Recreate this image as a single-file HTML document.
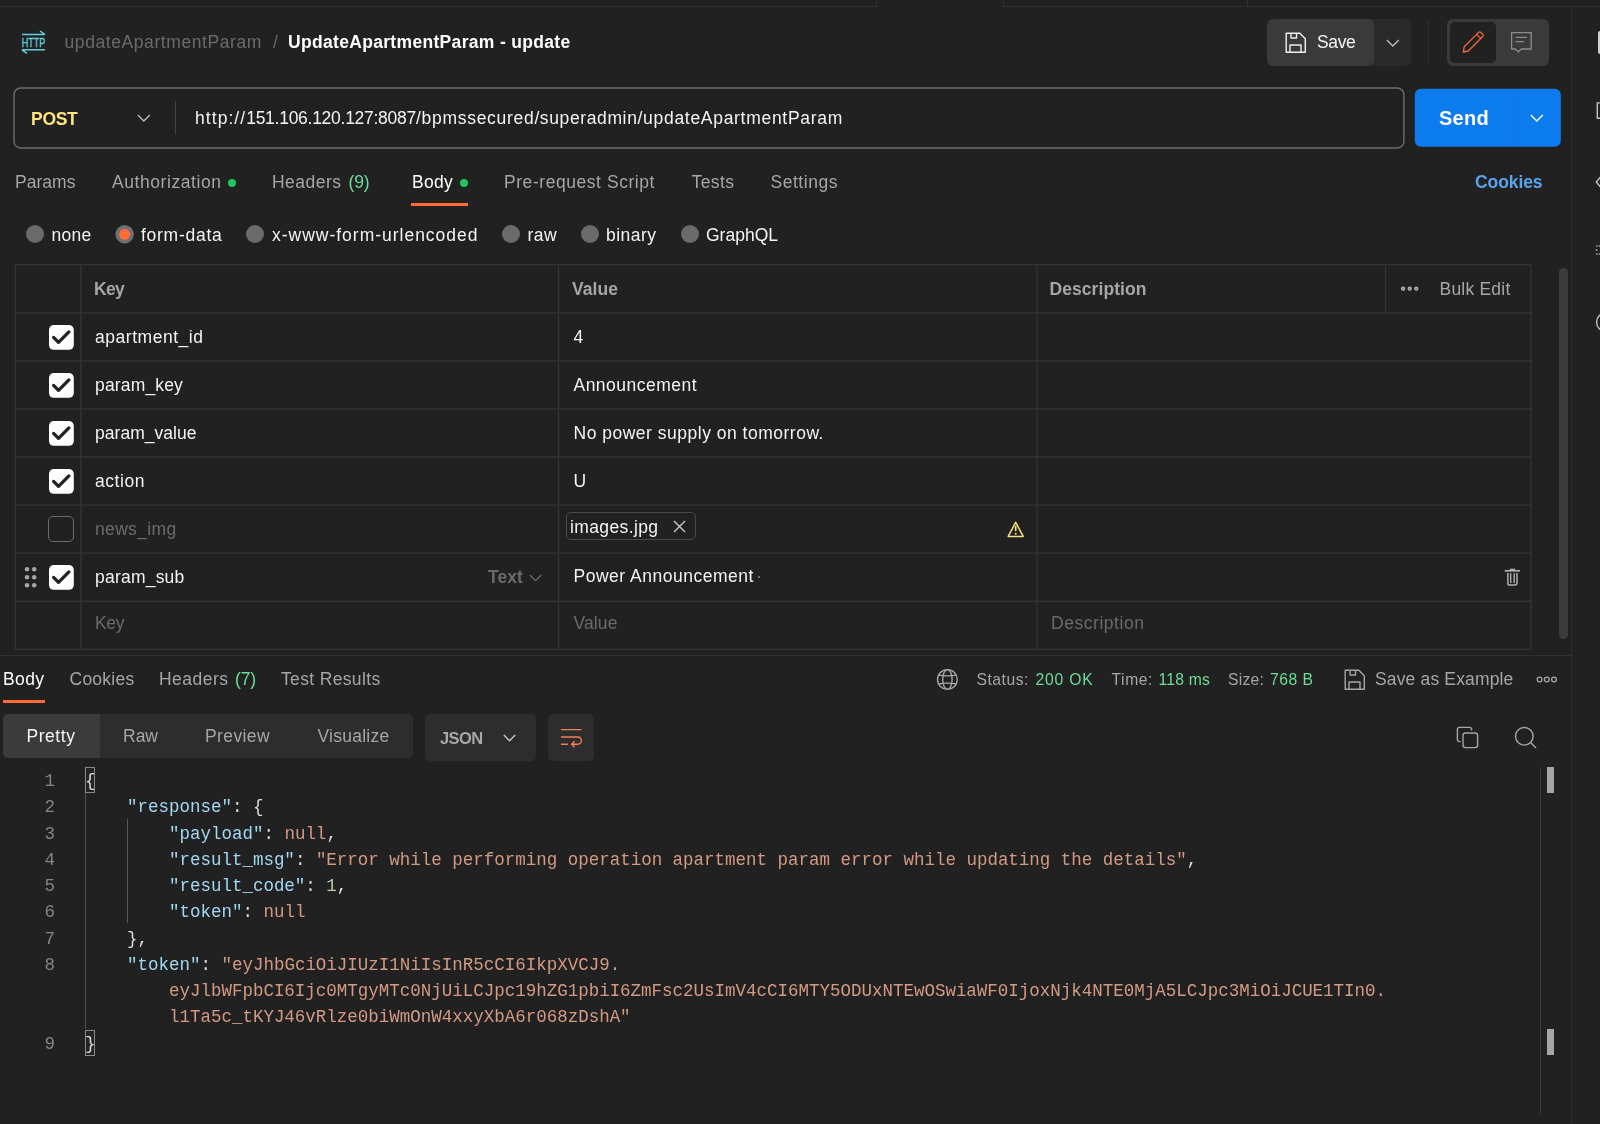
<!DOCTYPE html>
<html lang="en">
<head>
<meta charset="utf-8">
<title>UpdateApartmentParam - update</title>
<style>
*{box-sizing:border-box;margin:0;padding:0}
html,body{width:1600px;height:1124px;overflow:hidden;background:#212121}
body{position:relative;font-family:"Liberation Sans",Arial,sans-serif;color:#f4f4f4}
.gl{position:absolute;left:0;top:0;width:1600px;height:1124px;will-change:transform}
.t{position:absolute;white-space:pre;line-height:24px;height:24px}
.b{position:absolute}
.hl{position:absolute;height:1px;background:#333}
.vl{position:absolute;width:1px;background:#333}
svg{position:absolute;overflow:visible}
.cb{position:absolute;width:25px;height:25px;border-radius:5px;background:#fff}
pre{position:absolute;font-family:"Liberation Mono",monospace;font-size:17.497px;line-height:26.25px;white-space:pre;color:#dcdcdc}
.k{color:#a2d8f2}.s{color:#d29a83}.n{color:#b5cea8}.p{color:#dcdcdc}
</style>
</head>
<body>
<!-- top tab strip remnants -->
<div class="hl" style="left:0;top:6px;width:877px;background:#303030"></div>
<div class="hl" style="left:1003px;top:6px;width:597px;background:#303030"></div>
<div class="vl" style="left:876px;top:0;height:6px;background:#303030"></div>
<div class="vl" style="left:1003px;top:0;height:6px;background:#303030"></div>
<div class="vl" style="left:1247px;top:0;height:6px;background:#303030"></div>
<!-- right sidebar -->
<div class="vl" style="left:1571px;top:7px;height:1117px;background:#303030"></div>
<div class="b" style="left:1598px;top:31px;width:4px;height:23px;border-radius:2px;background:#cfcfcf"></div>
<svg style="left:1590px;top:90px" width="10" height="260" viewBox="1590 90 10 260"><g fill="none" stroke="#c4c4c4" stroke-width="1.4"><path d="M1602 102.9H1597.3V118.3H1602"/><path d="M1602 175.3L1596.3 182L1602 188.7"/><circle cx="1606" cy="322.2" r="9.4"/></g><path d="M1596 246h1.6M1598.6 246H1600M1595.6 250h2M1596 254h1.6M1598.6 254H1600" fill="none" stroke="#9a9a9a" stroke-width="1.3"/></svg>

<!-- HTTP icon -->
<svg style="left:20px;top:29px" width="28" height="26" viewBox="0 0 28 26">
<path d="M2 5.6H25 M20 2l5 3.6 M25 20.8H2 M7 24.4l-5-3.6" fill="none" stroke="#5fd0de" stroke-width="1.5"/>
<text x="1.7" y="17.8" font-family="Liberation Sans, Arial, sans-serif" font-size="12.5" fill="#5fd0de" stroke="#5fd0de" stroke-width="0.35" textLength="23.6" lengthAdjust="spacingAndGlyphs">HTTP</text>
</svg>

<!-- Save button -->
<div class="b" style="left:1368px;top:19px;width:42.5px;height:46.5px;background:#2a2a2a;border-radius:0 6px 6px 0"></div>
<div class="b" style="left:1267px;top:19px;width:107px;height:46.5px;background:#3a3a3a;border-radius:6px"></div>
<svg style="left:1285px;top:31.5px" width="22" height="22" viewBox="0 0 22 22"><path d="M1.2 1.2H14.8L20.3 6.7V20.3H1.2Z M6 1.2V6H11.5V1.2 M5 20.3V13H16V20.3" fill="none" stroke="#f0f0f0" stroke-width="1.4" stroke-linejoin="round"/></svg>
<svg style="left:1386px;top:38.5px" width="14" height="9" viewBox="0 0 14 9"><path d="M0.8 1l6 6 6-6" fill="none" stroke="#bdbdbd" stroke-width="1.3"/></svg>
<div class="vl" style="left:1428px;top:19px;height:46px;background:#303030"></div>
<!-- toggle -->
<div class="b" style="left:1447px;top:19px;width:102px;height:46.5px;background:#3a3a3a;border-radius:6px"></div>
<div class="b" style="left:1450px;top:22px;width:46px;height:40.5px;background:#212121;border-radius:5px"></div>
<svg style="left:1461px;top:30px" width="24" height="24" viewBox="0 0 24 24"><path d="M2.3 22l0.9-5.2L17.6 2.4a1.6 1.6 0 0 1 2.2 0l1.9 1.9a1.6 1.6 0 0 1 0 2.2L7.3 21Z M15.6 4.4l4 4" fill="none" stroke="#f26b3a" stroke-width="1.3" stroke-linejoin="round"/></svg>
<svg style="left:1510px;top:31px" width="24" height="24" viewBox="0 0 24 24"><path d="M1.6 1.6H21.2V18H11.5L8.3 20.8L5.2 18H1.6Z M5.5 6.3H17 M5.5 10.7H14" fill="none" stroke="#8c8c8c" stroke-width="1.3" stroke-linejoin="round"/></svg>

<!-- URL bar -->
<svg style="left:0;top:80px" width="1420" height="80" viewBox="0 80 1420 80"><rect x="14" y="88.05" width="1389.9" height="59.95" rx="6.5" fill="none" stroke="#6e6e6e" stroke-width="1.4"/></svg>
<svg style="left:136.5px;top:113.5px" width="14" height="9" viewBox="0 0 14 9"><path d="M0.8 1l6 6 6-6" fill="none" stroke="#bdbdbd" stroke-width="1.3"/></svg>
<div class="vl" style="left:175px;top:101px;height:34px;background:#444"></div>
<!-- Send -->
<svg style="left:1410px;top:80px" width="160" height="80" viewBox="1410 80 160 80"><rect x="1414.8" y="88.7" width="146" height="58" rx="6" fill="#0c7bee"/></svg>
<div class="vl" style="left:1513px;top:89px;height:57.5px;background:#1674de"></div>
<svg style="left:1530px;top:114px" width="14" height="9" viewBox="0 0 14 9"><path d="M0.8 1l6 6 6-6" fill="none" stroke="#ffffff" stroke-width="1.5"/></svg>

<!-- tab dots & underline -->
<div class="b" style="left:227.5px;top:178.5px;width:8.5px;height:8.5px;border-radius:50%;background:#22c25e"></div>
<div class="b" style="left:459.5px;top:178.5px;width:8.5px;height:8.5px;border-radius:50%;background:#22c25e"></div>
<div class="b" style="left:411px;top:202.5px;width:57px;height:3px;background:#ff6c37"></div>

<!-- radios -->
<svg style="left:0;top:215px" width="800" height="40" viewBox="0 215 800 40"><circle cx="35" cy="234" r="9" fill="#6b6b6b"/><circle cx="255" cy="234" r="9" fill="#6b6b6b"/><circle cx="511" cy="234" r="9" fill="#6b6b6b"/><circle cx="590" cy="234" r="9" fill="#6b6b6b"/><circle cx="690" cy="234" r="9" fill="#6b6b6b"/><circle cx="124.6" cy="234.3" r="9.2" fill="#6e7074"/><circle cx="124.6" cy="234.3" r="5.5" fill="#ff6c37"/></svg>

<!-- table -->
<svg style="left:0;top:0" width="1600" height="700" viewBox="0 0 1600 700"><g fill="none" stroke="#343434" stroke-width="1.3"><path d="M14.7 264.70H1531.5"/><path d="M14.7 312.78H1531.5"/><path d="M14.7 360.86H1531.5"/><path d="M14.7 408.94H1531.5"/><path d="M14.7 457.02H1531.5"/><path d="M14.7 505.10H1531.5"/><path d="M14.7 553.18H1531.5"/><path d="M14.7 601.26H1531.5"/><path d="M14.7 649.34H1531.5"/><path d="M15.4 264.7V649.3"/><path d="M80.9 264.7V649.3"/><path d="M558.6 264.7V649.3"/><path d="M1037.1 264.7V649.3"/><path d="M1530.9 264.7V649.3"/><path d="M1385.5 264.7V312.8"/></g></svg>
<!-- scrollbar -->
<div class="b" style="left:1558.5px;top:268px;width:9px;height:371px;border-radius:5px;background:#3b3b3b"></div>
<!-- bulk dots -->
<svg style="left:1398px;top:280px" width="24" height="18" viewBox="1398 280 24 18"><g fill="#8a8a8a" stroke="#b4b4b4" stroke-width="1.1"><circle cx="1403.1" cy="288.7" r="1.6"/><circle cx="1409.7" cy="288.7" r="1.6"/><circle cx="1416.3" cy="288.7" r="1.6"/></g></svg>

<!-- checkboxes -->
<svg style="left:49px;top:324.6px" width="25" height="25" viewBox="0 0 25 25"><rect x="0" y="0" width="24.8" height="24.8" rx="4.8" fill="#ffffff"/><path d="M4.6 12.4l4.9 4.9 10.4-10.4" fill="none" stroke="#212121" stroke-width="3.3" stroke-linecap="round" stroke-linejoin="round"/></svg>
<svg style="left:49px;top:372.7px" width="25" height="25" viewBox="0 0 25 25"><rect x="0" y="0" width="24.8" height="24.8" rx="4.8" fill="#ffffff"/><path d="M4.6 12.4l4.9 4.9 10.4-10.4" fill="none" stroke="#212121" stroke-width="3.3" stroke-linecap="round" stroke-linejoin="round"/></svg>
<svg style="left:49px;top:420.8px" width="25" height="25" viewBox="0 0 25 25"><rect x="0" y="0" width="24.8" height="24.8" rx="4.8" fill="#ffffff"/><path d="M4.6 12.4l4.9 4.9 10.4-10.4" fill="none" stroke="#212121" stroke-width="3.3" stroke-linecap="round" stroke-linejoin="round"/></svg>
<svg style="left:49px;top:468.8px" width="25" height="25" viewBox="0 0 25 25"><rect x="0" y="0" width="24.8" height="24.8" rx="4.8" fill="#ffffff"/><path d="M4.6 12.4l4.9 4.9 10.4-10.4" fill="none" stroke="#212121" stroke-width="3.3" stroke-linecap="round" stroke-linejoin="round"/></svg>
<svg style="left:49px;top:565.0px" width="25" height="25" viewBox="0 0 25 25"><rect x="0" y="0" width="24.8" height="24.8" rx="4.8" fill="#ffffff"/><path d="M4.6 12.4l4.9 4.9 10.4-10.4" fill="none" stroke="#212121" stroke-width="3.3" stroke-linecap="round" stroke-linejoin="round"/></svg>
<div class="b" style="left:48px;top:516px;width:26px;height:26px;border-radius:5px;border:1.6px solid #6b6b6b;background:#212121"></div>
<!-- drag handle -->
<svg style="left:20px;top:560px" width="24" height="34" viewBox="20 560 24 34"><g fill="#a6a6a6"><circle cx="27" cy="569.3" r="2.25"/><circle cx="34.2" cy="569.3" r="2.25"/><circle cx="27" cy="577.3" r="2.25"/><circle cx="34.2" cy="577.3" r="2.25"/><circle cx="27" cy="585.3" r="2.25"/><circle cx="34.2" cy="585.3" r="2.25"/></g></svg>
<!-- file chip -->
<div class="b" style="left:565.5px;top:512.3px;width:130px;height:28px;border:1.2px solid #4a4a4a;border-radius:5px"></div>
<svg style="left:673px;top:519.8px" width="13" height="13" viewBox="0 0 13 13"><path d="M1 1l11 11M12 1L1 12" fill="none" stroke="#c8c8c8" stroke-width="1.4"/></svg>
<!-- warning -->
<svg style="left:1000px;top:515px" width="30" height="30" viewBox="1000 515 30 30"><path d="M1015.7 522.3L1023.2 536.4H1008.2Z" fill="none" stroke="#f7e17c" stroke-width="1.5" stroke-linejoin="round"/><path d="M1015.7 525.8V531.2" stroke="#f7e17c" stroke-width="1.6"/><circle cx="1015.7" cy="533.7" r="1" fill="#f7e17c"/></svg>
<!-- Text chevron -->
<svg style="left:528.5px;top:573.5px" width="14" height="9" viewBox="0 0 14 9"><path d="M0.8 1l5.7 5.7 5.7-5.7" fill="none" stroke="#6b6b6b" stroke-width="1.3"/></svg>
<!-- whitespace dot -->
<div class="b" style="left:758px;top:576px;width:2px;height:2px;background:#6b6b6b"></div>
<!-- trash -->
<svg style="left:1500px;top:560px" width="30" height="34" viewBox="1500 560 30 34"><g fill="none" stroke="#b0b0b0" stroke-width="1.5"><path d="M1504.8 570.8H1520" stroke-width="1.7"/><path d="M1510 569.6H1515.2" stroke-width="1.8"/><path d="M1507.9 573V583.2a1.9 1.9 0 0 0 1.9 1.9H1515.1a1.9 1.9 0 0 0 1.9-1.9V573"/><path d="M1510.7 573.2V583 M1514.2 573.2V583" stroke-width="1.4"/></g></svg>

<!-- response separator -->
<div class="hl" style="left:0;top:655px;width:1571px;background:#303030"></div>
<div class="b" style="left:3px;top:700px;width:41.5px;height:3px;background:#ff6c37"></div>
<!-- globe -->
<svg style="left:936px;top:668px" width="23" height="23" viewBox="936 668 23 23"><g fill="none" stroke="#a9a9a9" stroke-width="1.35"><circle cx="947.4" cy="679.5" r="9.9"/><ellipse cx="947.4" cy="679.5" rx="4.7" ry="9.9"/><path d="M938.6 675.2Q947.4 676.6 956.2 675.2 M938.6 683.8Q947.4 682.4 956.2 683.8"/></g></svg>
<!-- save example icon -->
<svg style="left:1343.5px;top:668.5px" width="22" height="22" viewBox="0 0 22 22"><path d="M1.2 1.2H14.8L20.3 6.7V20.3H1.2Z M6 1.2V6H11.5V1.2 M5 20.3V13H16V20.3" fill="none" stroke="#a6a6a6" stroke-width="1.4" stroke-linejoin="round"/></svg>
<svg style="left:1535.5px;top:675px" width="22" height="9" viewBox="0 0 22 9"><g fill="none" stroke="#a6a6a6" stroke-width="1.3"><circle cx="3.6" cy="4.5" r="2.4"/><circle cx="10.8" cy="4.5" r="2.4"/><circle cx="18" cy="4.5" r="2.4"/></g></svg>

<!-- view tabs -->
<div class="b" style="left:2.5px;top:714px;width:410.5px;height:44px;background:#2d2d2d;border-radius:5px"></div>
<div class="b" style="left:2.5px;top:714px;width:97.5px;height:44px;background:#3b3b3b;border-radius:5px 0 0 5px"></div>
<div class="b" style="left:425px;top:714px;width:110.5px;height:46.5px;background:#2d2d2d;border-radius:5px"></div>
<svg style="left:503px;top:733.5px" width="14" height="9" viewBox="0 0 14 9"><path d="M0.8 1l5.7 5.7 5.7-5.7" fill="none" stroke="#c8c8c8" stroke-width="1.4"/></svg>
<div class="b" style="left:547.5px;top:714px;width:46.5px;height:46.5px;background:#2d2d2d;border-radius:5px"></div>
<svg style="left:555px;top:724px" width="32" height="28" viewBox="555 724 32 28"><path d="M561 729.6H581.6 M561 737H577.8a3.6 3.6 0 0 1 0 7.2H571.6 M574.6 741.2l-3 3 3 3 M561 744.2H568" fill="none" stroke="#f0805a" stroke-width="1.35"/></svg>
<!-- copy / search -->
<svg style="left:1456px;top:726px" width="23" height="23" viewBox="0 0 23 23"><g fill="none" stroke="#a6a6a6" stroke-width="1.4"><rect x="7" y="7" width="14.6" height="14.6" rx="2.5"/><path d="M4.6 15.6H3.4a2 2 0 0 1-2-2V3.4a2 2 0 0 1 2-2H13.6a2 2 0 0 1 2 2V4.6"/></g></svg>
<svg style="left:1514px;top:726px" width="23" height="23" viewBox="0 0 23 23"><g fill="none" stroke="#a6a6a6" stroke-width="1.4"><circle cx="10.3" cy="10.3" r="8.8"/><path d="M16.6 16.6L22 22"/></g></svg>

<!-- code area -->
<div class="vl" style="left:1540px;top:767px;height:348px;background:#3a3a3a"></div>
<div class="b" style="left:1547px;top:767px;width:7px;height:26px;background:#a6a6a6"></div>
<div class="b" style="left:1547px;top:1029px;width:7px;height:26px;background:#a6a6a6"></div>
<div class="vl" style="left:85px;top:793px;height:236px;background:#505050"></div>
<div class="vl" style="left:127px;top:819px;height:104px;background:#585858"></div>
<div class="b" style="left:85px;top:767px;width:10px;height:26px;border:1px solid #8a8a8a;background:#20251f"></div>
<div class="b" style="left:85px;top:1029.5px;width:10px;height:26px;border:1px solid #8a8a8a;background:#20251f"></div>
<div class="gl">
<pre style="left:13px;top:768.1px;width:42px;text-align:right;color:#858585">1
2
3
4
5
6
7
8


9</pre>
<pre style="left:85px;top:768.1px"><span class="p">{</span>
    <span class="k">"response"</span>: {
        <span class="k">"payload"</span>: <span class="s">null</span>,
        <span class="k">"result_msg"</span>: <span class="s">"Error while performing operation apartment param error while updating the details"</span>,
        <span class="k">"result_code"</span>: <span class="n">1</span>,
        <span class="k">"token"</span>: <span class="s">null</span>
    },
    <span class="k">"token"</span>: <span class="s">"eyJhbGciOiJIUzI1NiIsInR5cCI6IkpXVCJ9.</span>
        <span class="s">eyJlbWFpbCI6Ijc0MTgyMTc0NjUiLCJpc19hZG1pbiI6ZmFsc2UsImV4cCI6MTY5ODUxNTEwOSwiaWF0IjoxNjk4NTE0MjA5LCJpc3MiOiJCUE1TIn0.</span>
        <span class="s">l1Ta5c_tKYJ46vRlze0biWmOnW4xxyXbA6r068zDshA"</span>
<span class="p">}</span></pre>

<span class="t" style="left:64.5px;top:30.0px;font-size:17.5px;font-weight:400;color:#6b6b6b;letter-spacing:0.584px">updateApartmentParam</span>
<span class="t" style="left:273px;top:30.0px;font-size:17.5px;font-weight:400;color:#6b6b6b;letter-spacing:0.125px">/</span>
<span class="t" style="left:288px;top:30.0px;font-size:17.5px;font-weight:700;color:#ffffff;letter-spacing:0.319px">UpdateApartmentParam - update</span>
<span class="t" style="left:1317px;top:30.0px;font-size:17.5px;font-weight:400;color:#f4f4f4;letter-spacing:-0.348px">Save</span>
<span class="t" style="left:31px;top:106.5px;font-size:17.5px;font-weight:700;color:#ffe47e;letter-spacing:-0.289px">POST</span>
<span class="t" style="left:195px;top:106.0px;font-size:17.5px;font-weight:400;color:#f4f4f4;letter-spacing:1.06px">http://</span>
<span class="t" style="left:246.2px;top:106.0px;font-size:17.5px;font-weight:400;color:#f4f4f4;letter-spacing:-0.269px">151.106.120.127:8087</span>
<span class="t" style="left:416px;top:106.0px;font-size:17.5px;font-weight:400;color:#f4f4f4;letter-spacing:0.707px">/bpmssecured</span>
<span class="t" style="left:534.4px;top:106.0px;font-size:17.5px;font-weight:400;color:#f4f4f4;letter-spacing:0.617px">/superadmin</span>
<span class="t" style="left:637.5px;top:106.0px;font-size:17.5px;font-weight:400;color:#f4f4f4;letter-spacing:0.706px">/updateApartmentParam</span>
<span class="t" style="left:1439px;top:105.8px;font-size:20px;font-weight:700;color:#ffffff;letter-spacing:0.273px">Send</span>
<span class="t" style="left:15px;top:170.0px;font-size:17.5px;font-weight:400;color:#a6a6a6;letter-spacing:0.034px">Params</span>
<span class="t" style="left:112px;top:170.0px;font-size:17.5px;font-weight:400;color:#a6a6a6;letter-spacing:0.565px">Authorization</span>
<span class="t" style="left:272px;top:170.0px;font-size:17.5px;font-weight:400;color:#a6a6a6;letter-spacing:0.478px">Headers</span>
<span class="t" style="left:348.5px;top:170.0px;font-size:17.5px;font-weight:400;color:#6bdd9a;letter-spacing:-0.13px">(9)</span>
<span class="t" style="left:412px;top:170.0px;font-size:17.5px;font-weight:400;color:#ffffff;letter-spacing:0.277px">Body</span>
<span class="t" style="left:504px;top:170.0px;font-size:17.5px;font-weight:400;color:#a6a6a6;letter-spacing:0.554px">Pre-request Script</span>
<span class="t" style="left:691.5px;top:170.0px;font-size:17.5px;font-weight:400;color:#a6a6a6;letter-spacing:0.428px">Tests</span>
<span class="t" style="left:770.5px;top:170.0px;font-size:17.5px;font-weight:400;color:#a6a6a6;letter-spacing:0.533px">Settings</span>
<span class="t" style="left:1475px;top:170.0px;font-size:17.5px;font-weight:700;color:#5aa3ee;letter-spacing:-0.083px">Cookies</span>
<span class="t" style="left:51.5px;top:222.5px;font-size:17.5px;font-weight:400;color:#f4f4f4;letter-spacing:0.266px">none</span>
<span class="t" style="left:141px;top:222.5px;font-size:17.5px;font-weight:400;color:#f4f4f4;letter-spacing:0.734px">form-data</span>
<span class="t" style="left:272px;top:222.5px;font-size:17.5px;font-weight:400;color:#f4f4f4;letter-spacing:0.988px">x-www-form-urlencoded</span>
<span class="t" style="left:527.5px;top:222.5px;font-size:17.5px;font-weight:400;color:#f4f4f4;letter-spacing:0.432px">raw</span>
<span class="t" style="left:606px;top:222.5px;font-size:17.5px;font-weight:400;color:#f4f4f4;letter-spacing:0.471px">binary</span>
<span class="t" style="left:706px;top:222.5px;font-size:17.5px;font-weight:400;color:#f4f4f4;letter-spacing:0.002px">GraphQL</span>
<span class="t" style="left:94px;top:277.0px;font-size:17.5px;font-weight:700;color:#a6a6a6;letter-spacing:-0.703px">Key</span>
<span class="t" style="left:572px;top:277.0px;font-size:17.5px;font-weight:700;color:#a6a6a6;letter-spacing:0.053px">Value</span>
<span class="t" style="left:1049.5px;top:277.0px;font-size:17.5px;font-weight:700;color:#a6a6a6;letter-spacing:0.065px">Description</span>
<span class="t" style="left:1439.5px;top:276.5px;font-size:17.5px;font-weight:400;color:#a6a6a6;letter-spacing:0.215px">Bulk Edit</span>
<span class="t" style="left:95px;top:324.5px;font-size:17.5px;font-weight:400;color:#f4f4f4;letter-spacing:0.529px">apartment_id</span>
<span class="t" style="left:573.5px;top:324.5px;font-size:17.5px;font-weight:400;color:#f4f4f4;letter-spacing:-0.234px">4</span>
<span class="t" style="left:95px;top:372.5px;font-size:17.5px;font-weight:400;color:#f4f4f4;letter-spacing:0.158px">param_key</span>
<span class="t" style="left:573.5px;top:372.5px;font-size:17.5px;font-weight:400;color:#f4f4f4;letter-spacing:0.48px">Announcement</span>
<span class="t" style="left:95px;top:420.5px;font-size:17.5px;font-weight:400;color:#f4f4f4;letter-spacing:0.03px">param_value</span>
<span class="t" style="left:573.5px;top:420.5px;font-size:17.5px;font-weight:400;color:#f4f4f4;letter-spacing:0.504px">No power supply on tomorrow.</span>
<span class="t" style="left:95px;top:468.5px;font-size:17.5px;font-weight:400;color:#f4f4f4;letter-spacing:0.549px">action</span>
<span class="t" style="left:573.5px;top:468.5px;font-size:17.5px;font-weight:400;color:#f4f4f4;letter-spacing:-1.641px">U</span>
<span class="t" style="left:95px;top:517.0px;font-size:17.5px;font-weight:400;color:#6b6b6b;letter-spacing:0.338px">news_img</span>
<span class="t" style="left:570px;top:515.0px;font-size:17.5px;font-weight:400;color:#f4f4f4;letter-spacing:0.386px">images.jpg</span>
<span class="t" style="left:95px;top:565.0px;font-size:17.5px;font-weight:400;color:#f4f4f4;letter-spacing:0.215px">param_sub</span>
<span class="t" style="left:488px;top:565.0px;font-size:17.5px;font-weight:700;color:#6b6b6b;letter-spacing:0.078px">Text</span>
<span class="t" style="left:573.5px;top:564.0px;font-size:17.5px;font-weight:400;color:#f4f4f4;letter-spacing:0.515px">Power Announcement</span>
<span class="t" style="left:95px;top:611.0px;font-size:17.5px;font-weight:400;color:#6b6b6b;letter-spacing:-0.385px">Key</span>
<span class="t" style="left:573.5px;top:611.0px;font-size:17.5px;font-weight:400;color:#6b6b6b;letter-spacing:0.106px">Value</span>
<span class="t" style="left:1051px;top:611.0px;font-size:17.5px;font-weight:400;color:#6b6b6b;letter-spacing:0.541px">Description</span>
<span class="t" style="left:3px;top:667.0px;font-size:17.5px;font-weight:400;color:#ffffff;letter-spacing:0.402px">Body</span>
<span class="t" style="left:69.5px;top:667.0px;font-size:17.5px;font-weight:400;color:#a6a6a6;letter-spacing:0.252px">Cookies</span>
<span class="t" style="left:159px;top:667.0px;font-size:17.5px;font-weight:400;color:#a6a6a6;letter-spacing:0.478px">Headers</span>
<span class="t" style="left:235px;top:667.0px;font-size:17.5px;font-weight:400;color:#6bdd9a;letter-spacing:-0.13px">(7)</span>
<span class="t" style="left:281px;top:667.0px;font-size:17.5px;font-weight:400;color:#a6a6a6;letter-spacing:0.349px">Test Results</span>
<span class="t" style="left:976.5px;top:667.9px;font-size:15.7px;font-weight:400;color:#a6a6a6;letter-spacing:0.522px">Status:</span>
<span class="t" style="left:1035.5px;top:667.9px;font-size:15.7px;font-weight:400;color:#6bdd9a;letter-spacing:0.799px">200 OK</span>
<span class="t" style="left:1111.5px;top:667.9px;font-size:15.7px;font-weight:400;color:#a6a6a6;letter-spacing:0.572px">Time:</span>
<span class="t" style="left:1158.5px;top:667.9px;font-size:15.7px;font-weight:400;color:#6bdd9a;letter-spacing:0.203px">118 ms</span>
<span class="t" style="left:1228px;top:667.9px;font-size:15.7px;font-weight:400;color:#a6a6a6;letter-spacing:0.222px">Size:</span>
<span class="t" style="left:1270px;top:667.9px;font-size:15.7px;font-weight:400;color:#6bdd9a;letter-spacing:0.5px">768 B</span>
<span class="t" style="left:1375px;top:667.0px;font-size:17.5px;font-weight:400;color:#a6a6a6;letter-spacing:0.154px">Save as Example</span>
<span class="t" style="left:26.5px;top:724.0px;font-size:17.5px;font-weight:400;color:#f4f4f4;letter-spacing:0.547px">Pretty</span>
<span class="t" style="left:123px;top:724.0px;font-size:17.5px;font-weight:400;color:#a6a6a6;letter-spacing:-0.005px">Raw</span>
<span class="t" style="left:205px;top:724.0px;font-size:17.5px;font-weight:400;color:#a6a6a6;letter-spacing:0.393px">Preview</span>
<span class="t" style="left:317.5px;top:724.0px;font-size:17.5px;font-weight:400;color:#a6a6a6;letter-spacing:0.253px">Visualize</span>
<span class="t" style="left:440px;top:725.5px;font-size:16.5px;font-weight:700;color:#a8a8a8;letter-spacing:-0.609px">JSON</span>
</div>
</body>
</html>
